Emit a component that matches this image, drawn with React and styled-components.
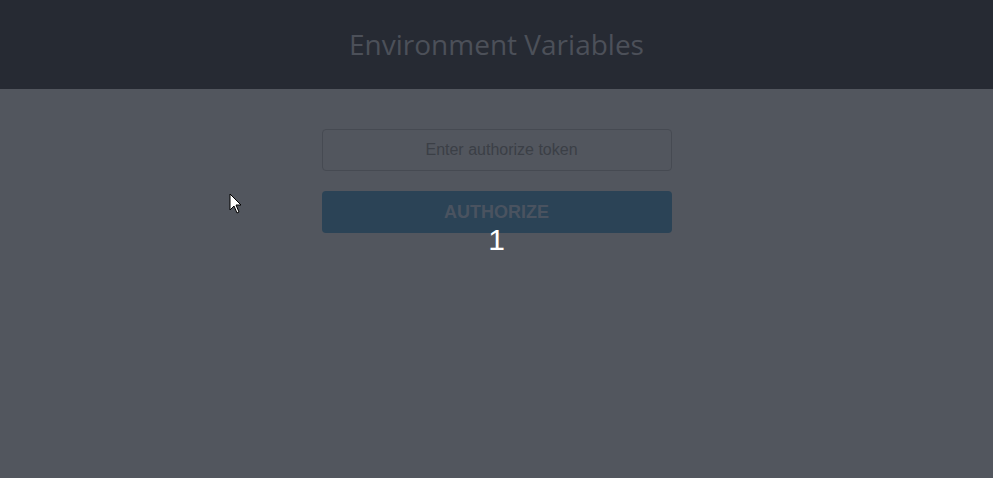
import React from "react";
import styled, { createGlobalStyle } from "styled-components";

const GlobalStyle = createGlobalStyle`
  html, body {
    margin: 0;
    padding: 0;
    height: 100%;
    background: #52565e;
  }
  #root {
    min-height: 100%;
  }
`;

const Page = styled.div`
  min-height: 478px;
  background: #52565e;
  font-family: "Liberation Sans", Arial, sans-serif;
`;

const Header = styled.header`
  height: 89px;
  background: #262a33;
  display: flex;
  align-items: center;
  justify-content: center;
`;

const Title = styled.h1`
  margin: 0 0 2px;
  font-family: "Open Sans", sans-serif;
  font-weight: 400;
  font-size: 28px;
  color: #4c5059;
`;

const Main = styled.main`
  display: flex;
  flex-direction: column;
  align-items: center;
  padding-top: 40px;
`;

const Form = styled.form`
  width: 350px;
  display: flex;
  flex-direction: column;
  gap: 20px;
`;

const TokenInput = styled.input`
  box-sizing: border-box;
  width: 100%;
  height: 42px;
  padding: 0 0 0 10px;
  background: transparent;
  border: 1px solid #464a52;
  border-radius: 4px;
  text-align: center;
  font-family: "Liberation Sans", Arial, sans-serif;
  font-size: 16px;
  color: #3b3f46;
  outline: none;
  &::placeholder {
    color: #3b3f46;
  }
`;

const Button = styled.button`
  height: 42px;
  border: none;
  border-radius: 4px;
  background: #2b4356;
  color: #4a5360;
  font-family: "Liberation Sans", Arial, sans-serif;
  font-weight: 700;
  font-size: 18px;
  text-transform: uppercase;
  cursor: pointer;
`;

const Counter = styled.div`
  margin-top: -8px;
  font-size: 30px;
  line-height: 30px;
  color: #ffffff;
  text-align: center;
  position: relative;
`;

const Cursor = styled.svg`
  position: absolute;
  left: 229px;
  top: 193px;
`;

export default function App() {
  return (
    <Page>
      <GlobalStyle />
      <Header>
        <Title>Environment Variables</Title>
      </Header>
      <Main>
        <Form onSubmit={(e) => e.preventDefault()}>
          <TokenInput placeholder="Enter authorize token" />
          <Button type="submit">Authorize</Button>
        </Form>
        <Counter>1</Counter>
      </Main>
      <Cursor width="14" height="22" viewBox="0 0 14 22">
        <path
          d="M1 1 L1 17 L5 13 L8 20 L10 19 L7 12 L12 12 Z"
          fill="#ffffff"
          stroke="#000000"
          strokeWidth="1"
          strokeLinejoin="round"
        />
      </Cursor>
    </Page>
  );
}
